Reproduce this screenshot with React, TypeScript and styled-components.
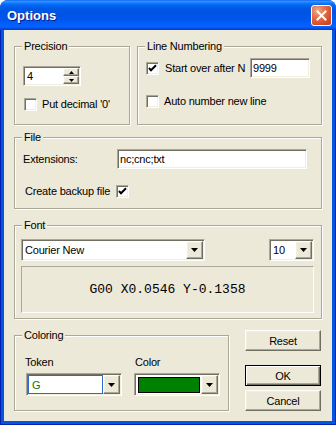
import React from "react";
import styled, { createGlobalStyle, css } from "styled-components";

const GlobalStyle = createGlobalStyle`
  html, body { margin: 0; padding: 0; background: #ffffff; }
  body {
    font-family: "Liberation Sans", Arial, sans-serif;
    font-size: 11px;
    letter-spacing: -0.2px;
    color: #000;
  }
  * { box-sizing: border-box; }
`;

const sunken = css`
  border: 1px solid;
  border-color: #aca899 #ffffff #ffffff #aca899;
  box-shadow: inset 1px 1px 0 #716f64, inset -1px -1px 0 #f1efe2;
`;

const raised = css`
  border: 1px solid;
  border-color: #ffffff #716f64 #716f64 #ffffff;
  box-shadow: inset -1px -1px 0 #aca899, inset 1px 1px 0 #f1efe2;
`;

const Window = styled.div`
  width: 336px;
  height: 425px;
  display: flex;
  flex-direction: column;
  border-radius: 8px 8px 0 0;
  overflow: hidden;
  background: #0855dd;
`;

const TitleBar = styled.div`
  height: 30px;
  flex: none;
  display: flex;
  align-items: center;
  justify-content: space-between;
  padding: 0 4px 0 7px;
  background: linear-gradient(
    180deg,
    #0058ee 0px,
    #3a93ff 1px,
    #288eff 2px,
    #127dff 3px,
    #036ffc 4px,
    #0262ee 6px,
    #0057e5 9px,
    #0054e3 13px,
    #0055eb 18px,
    #005bf5 22px,
    #0261ff 25px,
    #0a60ff 27px,
    #0046dc 29px,
    #003dd7 30px
  );
`;

const Title = styled.span`
  color: #ffffff;
  font: bold 13px "Liberation Sans", Arial, sans-serif;
  letter-spacing: 0;
  text-shadow: 1px 1px 0 #0a1883;
  margin-top: 1px;
`;

const CloseButton = styled.div`
  width: 21px;
  height: 21px;
  margin-top: 1px;
  border: 1px solid #ffffff;
  border-radius: 3px;
  background: radial-gradient(
    circle at 30% 25%,
    #f4a88a 0%,
    #e4714f 35%,
    #d5502a 70%,
    #c0401c 100%
  );
  display: flex;
  align-items: center;
  justify-content: center;
`;

const Frame = styled.div`
  flex: 1;
  display: flex;
  padding: 0 4px 4px;
  background: #0855dd;
  box-shadow: inset 1px 0 0 #0020b0, inset -1px 0 0 #0020b0, inset 0 -1px 0 #0020b0;
`;

const Client = styled.div`
  flex: 1;
  background: #ece9d8;
  padding: 16px 10px 0 10px;
  display: flex;
  flex-direction: column;
`;

const Row = styled.div<{ $mt?: number; $ml?: number; $gap?: number; $pr?: number }>`
  display: flex;
  align-items: center;
  margin-top: ${(p) => p.$mt ?? 0}px;
  margin-left: ${(p) => p.$ml ?? 0}px;
  padding-right: ${(p) => p.$pr ?? 0}px;
  gap: ${(p) => p.$gap ?? 0}px;
`;

const TopRow = styled.div`
  display: flex;
  gap: 7px;
`;

const BottomRow = styled.div`
  display: flex;
  align-items: flex-start;
  margin-top: 11px;
`;

const Group = styled.div<{ $w?: number; $h: number; $mt?: number }>`
  width: ${(p) => (p.$w ? `${p.$w}px` : "auto")};
  height: ${(p) => p.$h}px;
  margin-top: ${(p) => p.$mt ?? 0}px;
  flex: none;
  display: flex;
  flex-direction: column;
  border: 1px solid #aca899;
  box-shadow: inset 1px 1px 0 #ffffff, 1px 1px 0 #ffffff;
`;

const Legend = styled.div`
  align-self: flex-start;
  height: 13px;
  line-height: 13px;
  margin: -7px 0 0 7px;
  padding: 0 2px;
  background: #ece9d8;
  white-space: nowrap;
`;

const Label = styled.span<{ $w?: number }>`
  white-space: nowrap;
  line-height: 13px;
  ${(p) => p.$w && `width: ${p.$w}px; flex: none;`}
`;

const Edit = styled.div<{ $w: number }>`
  ${sunken};
  width: ${(p) => p.$w}px;
  height: 20px;
  flex: none;
  background: #ffffff;
  padding: 0 2px;
  display: flex;
  align-items: center;
  white-space: nowrap;
`;

const CheckBox = styled.span`
  ${sunken};
  width: 13px;
  height: 13px;
  flex: none;
  background: #ffffff;
  display: flex;
  align-items: center;
  justify-content: center;
`;

const SpinBox = styled.div`
  ${sunken};
  width: 58px;
  height: 20px;
  padding: 1px;
  background: #ffffff;
  display: flex;
`;

const SpinValue = styled.div`
  flex: 1;
  padding-left: 2px;
  display: flex;
  align-items: center;
`;

const SpinButtons = styled.div`
  width: 16px;
  display: flex;
  flex-direction: column;
`;

const SpinButton = styled.div`
  ${raised};
  flex: 1;
  background: #ece9d8;
  display: flex;
  align-items: center;
  justify-content: center;
`;

const Combo = styled.div<{ $w: number; $h: number; $pad?: number }>`
  ${sunken};
  width: ${(p) => p.$w}px;
  height: ${(p) => p.$h}px;
  flex: none;
  padding: ${(p) => p.$pad ?? 1}px;
  background: #ffffff;
  display: flex;
`;

const ComboText = styled.div<{ $color?: string }>`
  flex: 1;
  display: flex;
  align-items: center;
  padding-left: 2px;
  color: ${(p) => p.$color ?? "#000"};
  white-space: nowrap;
`;

const FocusField = styled.div`
  flex: 1;
  border: 1px solid #316ac5;
  display: flex;
  align-items: center;
  padding-left: 3px;
  color: #008000;
`;

const SwatchCell = styled.div`
  flex: 1;
  padding: 2px 1px 1px 2px;
  display: flex;
`;

const Swatch = styled.div<{ $color: string }>`
  flex: 1;
  border: 1px solid #000000;
  background: ${(p) => p.$color};
`;

const DropButton = styled.div`
  ${raised};
  width: 17px;
  flex: none;
  background: #ece9d8;
  display: flex;
  align-items: center;
  justify-content: center;
`;

const Preview = styled.div`
  margin: 5px 0 0 6px;
  width: 293px;
  height: 47px;
  border: 1px solid;
  border-color: #aca899 #ffffff #ffffff #aca899;
  display: flex;
  align-items: center;
  justify-content: center;
  font: 13px "Liberation Mono", "Courier New", monospace;
  letter-spacing: 0;
  color: #000;
`;

const Column = styled.div<{ $ml?: number; $w: number }>`
  display: flex;
  flex-direction: column;
  width: ${(p) => p.$w}px;
  margin-left: ${(p) => p.$ml ?? 0}px;
`;

const ColumnLabel = styled.span<{ $ml?: number }>`
  line-height: 13px;
  margin-left: ${(p) => p.$ml ?? 0}px;
  margin-bottom: 4px;
`;

const ButtonStack = styled.div`
  display: flex;
  flex-direction: column;
  margin-left: 16px;
`;

const Button = styled.div<{ $default?: boolean; $mt?: number }>`
  width: 76px;
  height: 21px;
  margin-top: ${(p) => p.$mt ?? 0}px;
  background: #ece9d8;
  display: flex;
  align-items: center;
  justify-content: center;
  ${(p) =>
    p.$default
      ? css`
          border: 1px solid #000000;
          box-shadow: inset 1px 1px 0 #ffffff, inset -1px -1px 0 #716f64,
            inset -2px -2px 0 #aca899;
        `
      : raised};
`;

const Tick = () => (
  <svg width="9" height="9" viewBox="0 0 9 9">
    <path d="M1 4 L3 6.3 L8 1.3" fill="none" stroke="#000" strokeWidth="2" />
  </svg>
);

const DownArrow = () => (
  <svg width="7" height="4" viewBox="0 0 7 4">
    <path d="M0 0 H7 L3.5 4 Z" fill="#000" />
  </svg>
);

const SmallArrow = ({ up }: { up?: boolean }) => (
  <svg width="5" height="3" viewBox="0 0 5 3">
    <path d={up ? "M2.5 0 L5 3 H0 Z" : "M0 0 H5 L2.5 3 Z"} fill="#000" />
  </svg>
);

const CloseGlyph = () => (
  <svg width="11" height="11" viewBox="0 0 11 11">
    <path d="M1.5 1.5 L9.5 9.5 M9.5 1.5 L1.5 9.5" stroke="#fff" strokeWidth="2" strokeLinecap="square" />
  </svg>
);

export default function App() {
  return (
    <>
      <GlobalStyle />
      <Window>
        <TitleBar>
          <Title>Options</Title>
          <CloseButton>
            <CloseGlyph />
          </CloseButton>
        </TitleBar>
        <Frame>
          <Client>
            <TopRow>
              <Group $w={116} $h={79}>
                <Legend>Precision</Legend>
                <Row $mt={13} $ml={8}>
                  <SpinBox>
                    <SpinValue>4</SpinValue>
                    <SpinButtons>
                      <SpinButton>
                        <SmallArrow up />
                      </SpinButton>
                      <SpinButton>
                        <SmallArrow />
                      </SpinButton>
                    </SpinButtons>
                  </SpinBox>
                </Row>
                <Row $mt={12} $ml={9} $gap={5}>
                  <CheckBox />
                  <Label>Put decimal '0'</Label>
                </Row>
              </Group>
              <Group $w={185} $h={79}>
                <Legend>Line Numbering</Legend>
                <Row $mt={5} $ml={8} $gap={6}>
                  <CheckBox>
                    <Tick />
                  </CheckBox>
                  <Label $w={79}>Start over after N</Label>
                  <Edit $w={60}>9999</Edit>
                </Row>
                <Row $mt={17} $ml={8} $gap={5}>
                  <CheckBox />
                  <Label>Auto number new line</Label>
                </Row>
              </Group>
            </TopRow>

            <Group $h={72} $mt={12}>
              <Legend>File</Legend>
              <Row $mt={5} $ml={8}>
                <Label $w={94}>Extensions:</Label>
                <Edit $w={190}>nc;cnc;txt</Edit>
              </Row>
              <Row $mt={16} $ml={10} $gap={6}>
                <Label $w={85}>Create backup file</Label>
                <CheckBox>
                  <Tick />
                </CheckBox>
              </Row>
            </Group>

            <Group $h={94} $mt={16}>
              <Legend>Font</Legend>
              <Row $mt={7} $ml={6}>
                <Combo $w={184} $h={22} $pad={1}>
                  <ComboText>Courier New</ComboText>
                  <DropButton>
                    <DownArrow />
                  </DropButton>
                </Combo>
                <Combo $w={45} $h={22} $pad={1} style={{ marginLeft: 64 }}>
                  <ComboText>10</ComboText>
                  <DropButton>
                    <DownArrow />
                  </DropButton>
                </Combo>
              </Row>
              <Preview>G00 X0.0546 Y-0.1358</Preview>
            </Group>

            <BottomRow>
              <Group $w={215} $h={76} $mt={5}>
                <Legend>Coloring</Legend>
                <Row $mt={14} $ml={10} $gap={12} style={{ alignItems: "flex-start" }}>
                  <Column $w={97}>
                    <ColumnLabel>Token</ColumnLabel>
                    <Combo $w={96} $h={23} $pad={1} style={{ marginLeft: 1 }}>
                      <FocusField>G</FocusField>
                      <DropButton>
                        <DownArrow />
                      </DropButton>
                    </Combo>
                  </Column>
                  <Column $w={86}>
                    <ColumnLabel $ml={1}>Color</ColumnLabel>
                    <Combo $w={86} $h={23} $pad={1}>
                      <SwatchCell>
                        <Swatch $color="#008000" />
                      </SwatchCell>
                      <DropButton>
                        <DownArrow />
                      </DropButton>
                    </Combo>
                  </Column>
                </Row>
              </Group>
              <ButtonStack>
                <Button>Reset</Button>
                <Button $default $mt={14}>
                  OK
                </Button>
                <Button $mt={4}>Cancel</Button>
              </ButtonStack>
            </BottomRow>
          </Client>
        </Frame>
      </Window>
    </>
  );
}
